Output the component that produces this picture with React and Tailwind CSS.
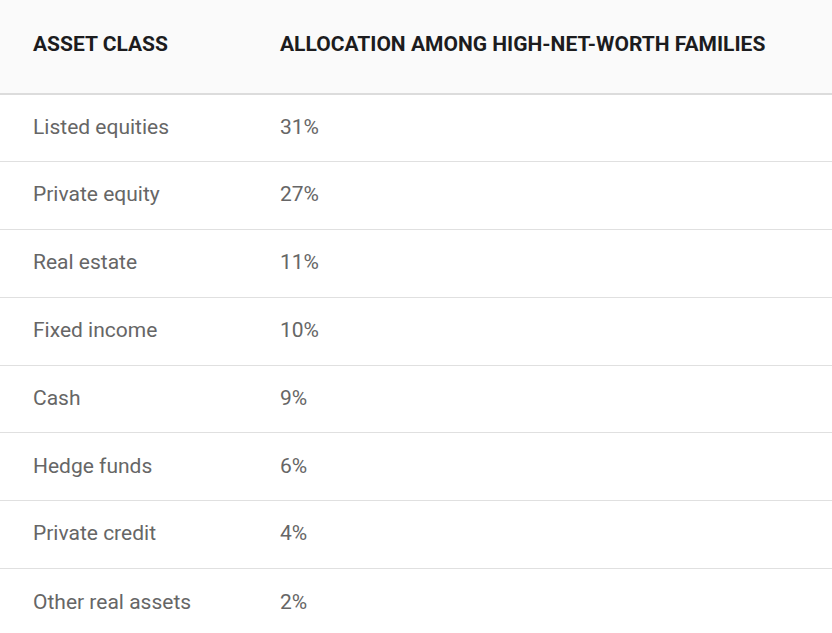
const rows = [
  ["Listed equities", "31%"],
  ["Private equity", "27%"],
  ["Real estate", "11%"],
  ["Fixed income", "10%"],
  ["Cash", "9%"],
  ["Hedge funds", "6%"],
  ["Private credit", "4%"],
  ["Other real assets", "2%"],
];

export default function App() {
  return (
    <div className="w-[832px] h-[633px] overflow-hidden bg-white" style={{ fontFamily: "Roboto, 'Liberation Sans', sans-serif" }}>
      <div className="flex h-[95px] items-center bg-[#fafafa] border-b-2 border-[#dcdcdc] pb-[4px] text-[21px] font-bold text-[#1c1c1e]">
        <div className="w-[280px] pl-[33px]">ASSET CLASS</div>
        <div>ALLOCATION AMONG HIGH-NET-WORTH FAMILIES</div>
      </div>
      {rows.map(([a, b], i) => (
        <div
          key={a}
          className={
            "flex items-center pb-[1px] text-[21px] text-[#666666] " +
            (i === 0 ? "h-[67px] " : "h-[67.85px] ") +
            (i < rows.length - 1 ? "border-b border-[#e0e0e0]" : "")
          }
        >
          <div className="w-[280px] pl-[33px]">{a}</div>
          <div>{b}</div>
        </div>
      ))}
    </div>
  );
}
